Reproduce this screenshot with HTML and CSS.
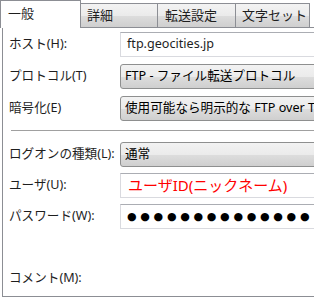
FILE: index.html
```html
<!DOCTYPE html>
<html lang="ja">
<head>
<meta charset="utf-8">
<link rel="stylesheet" href="styles.css">
</head>
<body>
<div class="dialog">
  <div class="tabs">
    <div class="tab active">一般</div>
    <div class="tab t2">詳細</div>
    <div class="tab t3">転送設定</div>
    <div class="tab t4">文字セット</div>
  </div>
  <div class="panel">
    <div class="row r-host">
      <label class="lbl">ホスト(H):</label>
      <div class="field text">ftp.geocities.jp</div>
    </div>
    <div class="row r-proto">
      <label class="lbl">プロトコル(T)</label>
      <div class="field combo">FTP - ファイル転送プロトコル</div>
    </div>
    <div class="row r-enc">
      <label class="lbl">暗号化(E)</label>
      <div class="field combo">使用可能なら明示的な FTP over TLS を使用</div>
    </div>
    <div class="sep"></div>
    <div class="row r-logon">
      <label class="lbl">ログオンの種類(L):</label>
      <div class="field combo">通常</div>
    </div>
    <div class="row r-user">
      <label class="lbl">ユーザ(U):</label>
      <div class="field text red">ユーザID(ニックネーム)</div>
    </div>
    <div class="row r-pass">
      <label class="lbl">パスワード(W):</label>
      <div class="field text dots">●●●●●●●●●●●●●●</div>
    </div>
    <div class="comment">コメント(M):</div>
  </div>
</div>
</body>
</html>
```

FILE: styles.css
```css
html, body {
  margin: 0;
  padding: 0;
  background: #ffffff;
  overflow: hidden;
}
body {
  width: 314px;
  height: 298px;
  font-family: "Noto Sans", "Noto Sans CJK JP", sans-serif;
  font-size: 12.6px;
  color: #1e1e1e;
}
.dialog {
  width: 360px;
}
.tabs {
  display: flex;
  align-items: flex-end;
  height: 27px;
}
.tab {
  box-sizing: border-box;
  height: 24px;
  border: 1px solid #8c8e94;
  border-bottom: none;
  border-right: none;
  background: linear-gradient(#f3f3f3, #ebebeb 50%, #dddddd 51%, #cfcfcf);
  display: flex;
  align-items: center;
  padding-left: 8px;
  line-height: 1;
  font-size: 13px;
  white-space: nowrap;
  flex: none;
}
.tab.active {
  height: 28px;
  width: 81px;
  margin-bottom: -1px;
  background: #ffffff;
  border-left: 1px solid #8c8e94;
  border-right: 1px solid #8c8e94;
  padding-left: 7px;
  padding-bottom: 2px;
  position: relative;
  z-index: 1;
}
.t2 { width: 76px; border-left: none; padding-left: 6px; }
.t3 { width: 78px; padding-left: 7px; }
.t4 { width: 75px; border-right: 1px solid #8c8e94; padding-left: 6px; }
.panel {
  box-sizing: border-box;
  margin-left: 2px;
  height: 270px;
  border: 1px solid #8c8e94;
  border-right: none;
  background: #ffffff;
  padding: 4px 0 0 6px;
}
.row {
  display: flex;
  align-items: center;
  height: 25px;
}
.lbl {
  width: 111px;
  flex: none;
  line-height: 1;
}
.field {
  box-sizing: border-box;
  height: 25px;
  width: 240px;
  flex: none;
  display: flex;
  align-items: center;
  white-space: nowrap;
  overflow: hidden;
  line-height: 1;
}
.text {
  border: 1px solid #d9dadf;
  border-top-color: #abadb3;
  background: #ffffff;
  padding-left: 6px;
}
.combo {
  border: 1px solid #8e8f8f;
  border-radius: 3px;
  background: linear-gradient(#f2f2f2, #ebebeb 50%, #dddddd 51%, #cfcfcf);
  padding-left: 4px;
  color: #000000;
}
.r-proto { margin-top: 7px; }
.r-enc { margin-top: 7px; }
.sep {
  height: 1px;
  background: #a0a0a0;
  border-bottom: 1px solid #ffffff;
  margin: 9px 0 10px 2px;
}
.r-user { margin-top: 6px; }
.r-pass { margin-top: 6px; }
.red {
  color: #ff0000;
  font-size: 15px;
  padding-left: 7px;
}
.dots {
  font-family: "DejaVu Sans", sans-serif;
  font-size: 11px;
  letter-spacing: 3.7px;
  color: #000000;
  padding-left: 6px;
}
.comment {
  margin-top: 43px;
  line-height: 1;
}
```
